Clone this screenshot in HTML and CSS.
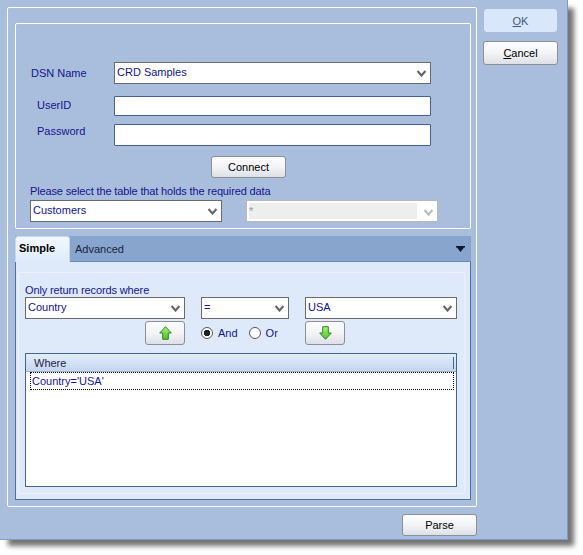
FILE: index.html
```html
<!DOCTYPE html>
<html lang="en">
<head>
  <meta charset="UTF-8" />
  <title>Database query</title>
  <link rel="stylesheet" href="styles.css">
</head>
<body>
  <svg class="icon-defs" width="0" height="0" aria-hidden="true">
    <defs>
      <linearGradient id="arrowFill" x1="0" y1="0" x2="0" y2="1">
        <stop offset="0" stop-color="#a8f27a" />
        <stop offset="1" stop-color="#4fc02e" />
      </linearGradient>
      <symbol id="chevron" viewBox="0 0 9 7">
        <path d="M0.5 1 L4.5 5.5 L8.5 1" fill="none" stroke="currentColor" stroke-width="2.2" />
      </symbol>
    </defs>
  </svg>

  <div class="window">
    <div class="main">
      <div class="outer-group">
        <!-- Connection -->
        <section class="conn-group">
          <div class="form-row row-dsn">
            <label class="form-label label-dsn">DSN Name</label>
            <div class="combo combo-dsn"><span>CRD Samples</span><svg class="chevron"><use href="#chevron" /></svg></div>
          </div>
          <div class="form-row row-user">
            <label class="form-label" for="userId">UserID</label>
            <input class="text-input input-user" id="userId" type="text" />
          </div>
          <div class="form-row row-pass">
            <label class="form-label" for="password">Password</label>
            <input class="text-input input-pass" id="password" type="password" />
          </div>
          <div class="connect-row">
            <button class="btn btn-connect" type="button">Connect</button>
          </div>
          <div class="table-label">Please select the table that holds the required data</div>
          <div class="table-row">
            <div class="combo combo-table"><span>Customers</span><svg class="chevron"><use href="#chevron" /></svg></div>
            <div class="combo combo-disabled"><span class="disabled-value">*</span><svg class="chevron"><use href="#chevron" /></svg></div>
          </div>
        </section>

        <!-- Tabs -->
        <div class="tab-strip">
          <div class="tab tab-active">Simple</div>
          <div class="tab">Advanced</div>
          <svg class="tab-menu" width="9" height="6" viewBox="0 0 9 6"><path d="M0 0H9V1.5H8L4.5 6L1 1.5H0Z" fill="#10182e" /></svg>
        </div>
        <div class="tab-panel">
          <div class="inner-panel">
            <div class="filter-label">Only return records where</div>
            <div class="filter-row">
              <div class="combo combo-field"><span>Country</span><svg class="chevron"><use href="#chevron" /></svg></div>
              <div class="combo combo-op"><span>=</span><svg class="chevron"><use href="#chevron" /></svg></div>
              <div class="combo combo-value"><span>USA</span><svg class="chevron"><use href="#chevron" /></svg></div>
            </div>
            <div class="action-row">
              <button class="btn btn-arrow" type="button" aria-label="Add up">
                <svg width="13" height="14" viewBox="0 0 13 14"><path d="M6.5 0.7 L12.3 7 H9.3 V13.3 H3.7 V7 H0.7 Z" fill="url(#arrowFill)" stroke="#2f8a1e" /></svg>
              </button>
              <div class="radio-group">
                <span class="radio radio-on"></span><span class="radio-text">And</span>
                <span class="radio radio-second"></span><span class="radio-text">Or</span>
              </div>
              <button class="btn btn-arrow" type="button" aria-label="Add down">
                <svg width="13" height="14" viewBox="0 0 13 14"><path d="M3.7 0.7 H9.3 V7 H12.3 L6.5 13.3 L0.7 7 H3.7 Z" fill="url(#arrowFill)" stroke="#2f8a1e" /></svg>
              </button>
            </div>
            <div class="where-table">
              <div class="where-head"><span>Where</span><i class="col-grip"></i></div>
              <div class="where-row">Country='USA'</div>
            </div>
          </div>
        </div>
      </div>
      <div class="parse-row">
        <button class="btn btn-parse" type="button">Parse</button>
      </div>
    </div>

    <div class="sidebar">
      <button class="btn btn-ok" type="button"><u>O</u>K</button>
      <button class="btn btn-cancel" type="button"><u>C</u>ancel</button>
    </div>
  </div>
</body>
</html>
```

FILE: styles.css
```css
* {
  box-sizing: border-box;
}
body {
  margin: 0;
  min-height: 555px;
  background: #fff;
  font-family: 'Liberation Sans', Arial, sans-serif;
  font-size: 11px;
  color: #14148c;
}
.icon-defs {
  display: block;
  height: 0;
}
.window {
  display: flex;
  width: 568px;
  height: 540px;
  padding: 7px 0 0 7px;
  background: #a9bedd;
  border-right: 1px solid #7d9dc6;
  border-bottom: 1px solid #7d9dc6;
  box-shadow: 7px 7px 5px -1px rgba(0,0,0,0.55);
}
.main {
  width: 470px;
}
.sidebar {
  display: flex;
  flex-direction: column;
  align-items: flex-start;
  margin-left: 6px;
  padding-top: 2px;
}

/* Groups */
.outer-group {
  width: 470px;
  height: 500px;
  padding: 15px 5px 0 7px;
  border: 1px solid #fff;
  border-radius: 2px;
}
.conn-group {
  width: 456px;
  height: 206px;
  padding: 38px 0 0 14px;
  border: 1px solid #fff;
  border-radius: 2px;
}
.form-row {
  display: flex;
  align-items: center;
}
.form-label {
  width: 84px;
  padding-left: 7px;
}
.label-dsn {
  padding-left: 1px;
  padding-bottom: 1px;
}
.row-user {
  margin-top: 12px;
}
.row-pass {
  margin-top: 8px;
}
.row-user .form-label {
  margin-top: -3px;
}
.row-pass .form-label {
  margin-top: -9px;
}
.text-input {
  width: 317px;
  border: 1px solid #44628f;
  background: #fff;
  border-radius: 1px;
  outline: none;
}
.input-user {
  height: 20px;
}
.input-pass {
  height: 22px;
}
.connect-row {
  display: flex;
  margin-top: 10px;
  padding-left: 181px;
}
.table-label {
  margin-top: 6px;
  height: 16px;
  line-height: 14px;
  letter-spacing: -0.14px;
}
.table-row {
  display: flex;
  gap: 24px;
}

/* Combos */
.combo {
  display: flex;
  align-items: center;
  justify-content: space-between;
  height: 22px;
  padding: 0 4px 2px 2px;
  background: #fff;
  border: 1px solid #6b6b6b;
  line-height: 16px;
}
.chevron {
  width: 9px;
  height: 7px;
  margin-top: 3px;
  color: #666;
}
.combo-dsn {
  width: 317px;
}
.combo-table {
  width: 192px;
}
.combo-disabled {
  width: 192px;
  padding: 2px 4px 2px 2px;
  border-color: #b9b9b9;
}
.combo-disabled .chevron {
  color: #b9b9b9;
}
.disabled-value {
  flex: 1;
  height: 16px;
  margin-right: 7px;
  background: #eee;
  color: #999;
}
.combo-field {
  width: 160px;
}
.combo-op {
  width: 88px;
}
.combo-value {
  width: 152px;
}

/* Tabs */
.tab-strip {
  display: flex;
  align-items: stretch;
  position: relative;
  width: 456px;
  height: 26px;
  margin-top: 7px;
  background: #88a6cd;
  border-bottom: 1px solid #6a8ab5;
}
.tab {
  width: 67px;
  padding: 7px 0 0 5px;
  color: #1a2440;
  font-size: 11px;
}
.tab-active {
  width: 55px;
  margin-bottom: -1px;
  padding: 5px 0 0 3px;
  background: linear-gradient(#f4f8fe, #deeafa);
  border-radius: 3px 3px 0 0;
  border: 1px solid #c7d7ec;
  border-bottom: none;
  color: #000;
  font-weight: bold;
}
.tab-menu {
  position: absolute;
  top: 10px;
  right: 6px;
}
.tab-panel {
  width: 456px;
  height: 238px;
  padding: 10px 0 0 2px;
  background: #deeafa;
  border: 1px solid #4f6f9f;
  border-top: none;
}
.inner-panel {
  width: 447px;
  height: 222px;
  padding: 11px 0 0 6px;
  border: 1px solid #eef3fa;
  border-radius: 2px;
}
.filter-label {
  height: 13px;
  line-height: 13px;
  letter-spacing: -0.12px;
}
.filter-row {
  display: flex;
  gap: 16px;
}
.action-row {
  display: flex;
  align-items: center;
  height: 24px;
  margin-top: 2px;
  padding-left: 120px;
}
.radio-group {
  display: flex;
  align-items: center;
  width: 120px;
  padding-left: 16px;
}
.radio {
  width: 12px;
  height: 12px;
  margin-right: 5px;
  background: #fff;
  border: 1px solid #555;
  border-radius: 50%;
}
.radio-on {
  background: radial-gradient(circle, #222 0, #222 3px, #fff 3.5px);
}
.radio-second {
  margin-left: 11px;
}

/* Table */
.where-table {
  width: 432px;
  height: 134px;
  margin-top: 8px;
  background: #fff;
  border: 1px solid #44628f;
}
.where-head {
  display: flex;
  align-items: center;
  justify-content: space-between;
  height: 18px;
  padding: 0 2px 0 8px;
  background: linear-gradient(#e3edfb, #c5d6f1);
  border-bottom: 1px solid #9db4d6;
  color: #1a2440;
}
.col-grip {
  width: 1px;
  height: 12px;
  background: #44628f;
}
.where-row {
  height: 18px;
  margin: 0 2px 0 4px;
  padding-left: 1px;
  line-height: 16px;
  border: 1px dotted #000;
}

/* Buttons */
.btn {
  padding: 0;
  font-family: inherit;
  font-size: 11px;
  color: #000;
  background: linear-gradient(#fdfdfe, #f3f4f6 50%, #dde0e4);
  border: 1px solid #8c9096;
  border-radius: 3px;
}
.btn-connect {
  width: 75px;
  height: 22px;
}
.btn-arrow {
  display: flex;
  align-items: center;
  justify-content: center;
  width: 40px;
  height: 24px;
}
.parse-row {
  display: flex;
  justify-content: flex-end;
  margin-top: 7px;
}
.btn-parse {
  width: 75px;
  height: 22px;
}
.btn-ok {
  width: 73px;
  height: 23px;
  margin-left: 1px;
  background: #d8e7f9;
  border-color: #d8e7f9;
  color: #44587f;
}
.btn-cancel {
  width: 75px;
  height: 24px;
  margin-top: 9px;
}
```
